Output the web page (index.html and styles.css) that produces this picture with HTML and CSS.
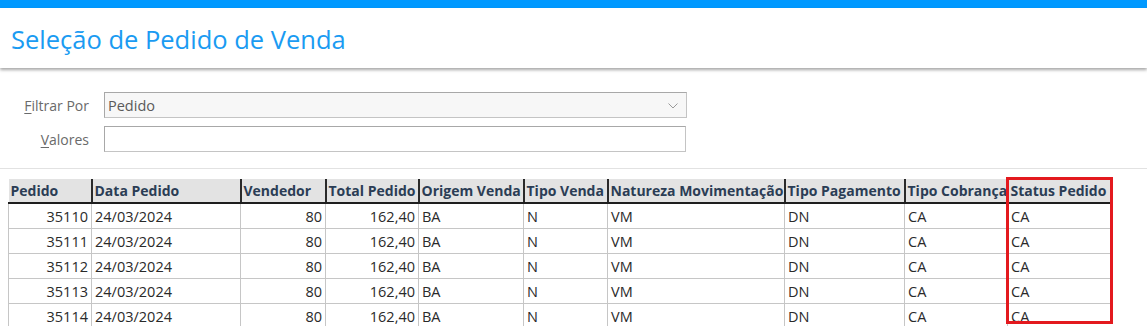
FILE: index.html
```html
<!DOCTYPE html>
<html lang="pt-BR">
<head>
<meta charset="utf-8">
<title>Seleção de Pedido de Venda</title>
<link rel="stylesheet" href="styles.css">
</head>
<body>
<div class="topbar"></div>
<header class="header"><h1 class="title">Seleção de Pedido de Venda</h1></header>
<section class="filters">
  <div class="frow">
    <label class="flabel"><u>F</u>iltrar Por</label>
    <div class="select"><span>Pedido</span>
      <svg class="chev" width="10" height="6" viewBox="0 0 10 6"><path d="M0.5 0.5 L5 5 L9.5 0.5" fill="none" stroke="#9a9a9a" stroke-width="1"/></svg>
    </div>
  </div>
  <div class="frow">
    <label class="flabel"><u>V</u>alores</label>
    <div class="input"></div>
  </div>
</section>
<div class="sep"></div>
<div class="grid-wrap">
<table class="grid">
  <colgroup>
    <col class="c1"><col class="c2"><col class="c3"><col class="c4"><col class="c5"><col class="c6"><col class="c7"><col class="c8"><col class="c9"><col class="c10">
  </colgroup>
  <thead>
    <tr><th>Pedido</th><th>Data Pedido</th><th>Vendedor</th><th>Total Pedido</th><th>Origem Venda</th><th>Tipo Venda</th><th>Natureza Movimentação</th><th>Tipo Pagamento</th><th>Tipo Cobrança</th><th>Status Pedido</th></tr>
  </thead>
  <tbody>
    <tr><td class="num">35110</td><td>24/03/2024</td><td class="num">80</td><td class="num">162,40</td><td>BA</td><td>N</td><td>VM</td><td>DN</td><td>CA</td><td>CA</td></tr>
    <tr><td class="num">35111</td><td>24/03/2024</td><td class="num">80</td><td class="num">162,40</td><td>BA</td><td>N</td><td>VM</td><td>DN</td><td>CA</td><td>CA</td></tr>
    <tr><td class="num">35112</td><td>24/03/2024</td><td class="num">80</td><td class="num">162,40</td><td>BA</td><td>N</td><td>VM</td><td>DN</td><td>CA</td><td>CA</td></tr>
    <tr><td class="num">35113</td><td>24/03/2024</td><td class="num">80</td><td class="num">162,40</td><td>BA</td><td>N</td><td>VM</td><td>DN</td><td>CA</td><td>CA</td></tr>
    <tr><td class="num">35114</td><td>24/03/2024</td><td class="num">80</td><td class="num">162,40</td><td>BA</td><td>N</td><td>VM</td><td>DN</td><td>CA</td><td>CA</td></tr>
  </tbody>
</table>
<div class="highlight"></div>
</div>
</body>
</html>
```
FILE: styles.css
```css
* { box-sizing: border-box; }
html, body { margin: 0; padding: 0; background: #fff; overflow: hidden; }
body { font-family: "Open Sans", "Noto Sans", sans-serif; width: 1147px; height: 326px; }

.topbar { height: 8px; background: #0099ff; }
.header {
  height: 60px;
  background: #fff;
  box-shadow: 0 2px 3px rgba(0,0,0,0.35);
  position: relative;
  padding-left: 11px;
  display: flex;
  align-items: center;
}
.title {
  margin: 0;
  font-weight: 400;
  font-size: 25.5px;
  color: #1a9bf2;
  letter-spacing: 0;
  padding-top: 1px;
}

.filters { padding-top: 24px; display: flex; flex-direction: column; gap: 8px; }
.frow { display: flex; align-items: center; gap: 15px; }
.flabel {
  width: 89px;
  text-align: right;
  font-size: 14px;
  color: #6a6a6a;
}
.flabel u { text-decoration-thickness: 1px; text-underline-offset: 2px; }
.select, .input {
  height: 26px;
  border: 1px solid #a8a8a8;
  border-bottom-color: #c4c4c4;
  border-right-color: #c4c4c4;
}
.select {
  width: 583px;
  background: #f7f7f7;
  display: flex;
  align-items: center;
  justify-content: space-between;
  padding: 0 8px 0 3px;
  font-size: 14.5px;
  color: #5a5a5a;
}
.chev { margin-top: 1px; }
.input { width: 582px; background: #fff; }

.sep { height: 1px; background: #e2e2e2; margin-top: 16px; }

.grid-wrap { position: relative; margin: 10px 0 0 8px; width: 1102px; }
.grid {
  border-collapse: collapse;
  table-layout: fixed;
  width: 1102px;
  font-size: 14.5px;
}
.c1 { width: 83px; } .c2 { width: 149px; } .c3 { width: 85px; } .c4 { width: 93px; }
.c5 { width: 105px; } .c6 { width: 84px; } .c7 { width: 177px; } .c8 { width: 120px; }
.c9 { width: 103px; } .c10 { width: 103px; }

.grid th {
  height: 24px;
  background: #e3e3e3;
  color: #2b3d55;
  font-weight: 700;
  font-size: 14px;
  text-align: left;
  padding: 0 2px;
  white-space: nowrap;
  overflow: hidden;
  border-left: 2px solid #2a2a2a;
  border-bottom: 2px solid #1e1e1e;
  line-height: 20px;
}
.grid th:first-child { border-left: none; }
.grid td {
  height: 25px;
  padding: 2px 3px 0;
  color: #2a2a2a;
  white-space: nowrap;
  overflow: hidden;
  border-left: 1px solid #c6c6c6;
  border-bottom: 1px solid #c6c6c6;
  line-height: 21px;
}
.grid td.num { text-align: right; }

.highlight {
  position: absolute;
  left: 998px;
  top: -2px;
  width: 107px;
  height: 147px;
  border: 3px solid #e3191e;
  pointer-events: none;
}
```
